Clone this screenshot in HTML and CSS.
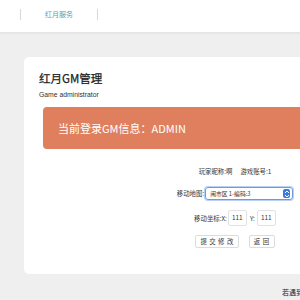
FILE: index.html
```html
<!DOCTYPE html>
<html lang="zh">
<head>
<meta charset="utf-8">
<link rel="stylesheet" href="styles.css">
</head>
<body>
<header class="topbar">
  <nav class="nav">
    <span class="nav-item">红月服务</span>
  </nav>
</header>
<main class="main">
  <section class="card">
    <h1 class="title">红月GM管理</h1>
    <p class="subtitle">Game administrator</p>
    <div class="banner">当前登录GM信息：ADMIN</div>
    <form class="form">
      <div class="row row-info"><span>玩家昵称:啊</span><span>游戏账号:1</span></div>
      <div class="row row-map">
        <span>移动地图:</span>
        <div class="select"><span class="select-text">闹市区 1-编码:3</span><span class="select-arrow"><svg width="6" height="8" viewBox="0 0 6 8"><path d="M1 3 L3 1 L5 3 M1 5 L3 7 L5 5" fill="none" stroke="#fff" stroke-width="1"/></svg></span></div>
      </div>
      <div class="row row-coord">
        <span>移动坐标:X:</span><span class="input">111</span><span class="ylabel">Y:</span><span class="input">111</span>
      </div>
      <div class="row row-btns">
        <span class="btn btn-submit">提 交 修 改</span><span class="btn">返 回</span>
      </div>
    </form>
  </section>
  <p class="footer-note">若遇到问题请联系管理员</p>
</main>
</body>
</html>
```
FILE: styles.css
```css
html, body {
  margin: 0;
  padding: 0;
}
body {
  width: 300px;
  height: 300px;
  overflow: hidden;
  background: #efefef;
  font-family: "Liberation Sans", "Noto Sans CJK SC", sans-serif;
  color: #333;
}
.topbar {
  height: 32px;
  background: #fff;
  border-bottom: 1px solid #e4e4e4;
  box-shadow: 0 1px 2px rgba(0,0,0,0.04);
}
.nav {
  display: flex;
  padding-left: 20px;
  padding-top: 9px;
}
.nav-item {
  width: 76px;
  height: 11px;
  border-left: 1px solid #d8d8d8;
  border-right: 1px solid #d8d8d8;
  text-align: center;
  font-size: 7px;
  line-height: 11px;
  color: #4fa0b0;
  font-family: "Noto Sans CJK SC", sans-serif;
}
.main {
  padding: 24px 0 0 24px;
}
.card {
  width: 440px;
  height: 217px;
  background: #fff;
  border-radius: 5px;
  padding: 14px 15px 0 15px;
  box-sizing: border-box;
}
.title {
  margin: 0;
  font-size: 11.5px;
  line-height: 14px;
  font-weight: normal;
  color: #222;
  font-family: "Noto Sans CJK SC", sans-serif;
  -webkit-text-stroke: 0.25px #222;
}
.subtitle {
  margin: 5px 0 0 0;
  font-size: 6.8px;
  line-height: 9px;
  color: #333;
}
.banner {
  margin: 8px 0 0 4px;
  height: 42px;
  background: #e07f5d;
  border-radius: 4px;
  color: #fff;
  font-size: 11px;
  line-height: 42px;
  padding-left: 15px;
  font-family: "Noto Sans CJK SC", sans-serif;
}
.form {
  margin: 17px 0 0 4px;
  width: 384px;
  display: flex;
  flex-direction: column;
  align-items: center;
  font-size: 6.4px;
  font-family: "Noto Sans CJK SC", sans-serif;
  color: #333;
}
.row {
  display: flex;
  align-items: center;
}
.row-info {
  gap: 8px;
  height: 10px;
}
.row-map {
  margin-top: 11px;
  gap: 1px;
}
.select {
  width: 80px;
  height: 11px;
  border: 1px solid #6a9ae0;
  box-shadow: 0 0 0 1px #b9d1f5;
  border-radius: 3px;
  display: flex;
  align-items: center;
  justify-content: space-between;
  padding: 0 2px 0 4px;
  box-sizing: content-box;
  font-size: 5.8px;
}
.select-arrow {
  width: 7px;
  height: 9px;
  background: #3a7be0;
  border-radius: 2px;
  display: flex;
  align-items: center;
  justify-content: center;
}
.row-coord {
  margin-top: 10px;
}
.input {
  width: 14px;
  height: 14px;
  border: 1px solid #e2e2e2;
  border-radius: 2px;
  line-height: 14px;
  padding-left: 3px;
  margin-left: 1px;
}
.ylabel {
  margin-left: 3px;
  margin-right: 1px;
}
.row-btns {
  margin-top: 9px;
  gap: 10px;
}
.btn {
  height: 11px;
  line-height: 11px;
  border: 1px solid #dcdcdc;
  border-radius: 2px;
  padding: 0 4px;
  background: #fff;
  letter-spacing: 0.5px;
}
.footer-note {
  margin: 14px 0 0 258px;
  font-size: 7px;
  line-height: 9px;
  white-space: nowrap;
  color: #222;
  font-family: "Noto Sans CJK SC", sans-serif;
}
```
